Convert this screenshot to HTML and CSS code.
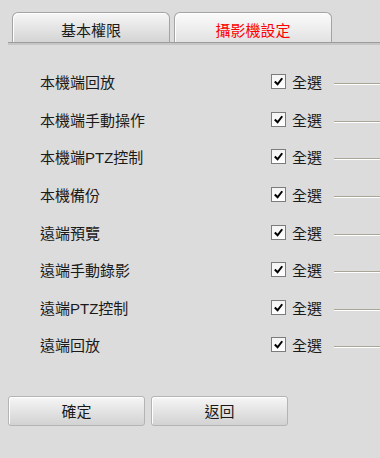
FILE: index.html
```html
<!DOCTYPE html>
<html lang="zh-Hant">
<head>
    <meta charset="UTF-8">
    <title>攝影機設定</title>
    <link rel="stylesheet" href="styles.css">
</head>
<body>
    <div class="tabs">
        <div class="tab">基本權限</div>
        <div class="tab active">攝影機設定</div>
    </div>

    <div class="perm-list">
        <div class="row">
            <span class="label">本機端回放</span>
            <span class="box"><svg viewBox="0 0 14 14"><path d="M3 7 L6 10 L11 3.5"/></svg></span>
            <span class="all">全選</span>
            <span class="track"></span>
        </div>
        <div class="row">
            <span class="label">本機端手動操作</span>
            <span class="box"><svg viewBox="0 0 14 14"><path d="M3 7 L6 10 L11 3.5"/></svg></span>
            <span class="all">全選</span>
            <span class="track"></span>
        </div>
        <div class="row">
            <span class="label">本機端PTZ控制</span>
            <span class="box"><svg viewBox="0 0 14 14"><path d="M3 7 L6 10 L11 3.5"/></svg></span>
            <span class="all">全選</span>
            <span class="track"></span>
        </div>
        <div class="row">
            <span class="label">本機備份</span>
            <span class="box"><svg viewBox="0 0 14 14"><path d="M3 7 L6 10 L11 3.5"/></svg></span>
            <span class="all">全選</span>
            <span class="track"></span>
        </div>
        <div class="row">
            <span class="label">遠端預覽</span>
            <span class="box"><svg viewBox="0 0 14 14"><path d="M3 7 L6 10 L11 3.5"/></svg></span>
            <span class="all">全選</span>
            <span class="track"></span>
        </div>
        <div class="row">
            <span class="label">遠端手動錄影</span>
            <span class="box"><svg viewBox="0 0 14 14"><path d="M3 7 L6 10 L11 3.5"/></svg></span>
            <span class="all">全選</span>
            <span class="track"></span>
        </div>
        <div class="row">
            <span class="label">遠端PTZ控制</span>
            <span class="box"><svg viewBox="0 0 14 14"><path d="M3 7 L6 10 L11 3.5"/></svg></span>
            <span class="all">全選</span>
            <span class="track"></span>
        </div>
        <div class="row">
            <span class="label">遠端回放</span>
            <span class="box"><svg viewBox="0 0 14 14"><path d="M3 7 L6 10 L11 3.5"/></svg></span>
            <span class="all">全選</span>
            <span class="track"></span>
        </div>
    </div>

    <div class="actions">
        <button class="btn">確定</button>
        <button class="btn">返回</button>
    </div>
</body>
</html>
```

FILE: styles.css
```css
body {
    margin: 0;
    background-color: #dcdcdc;
    font-family: 'Liberation Sans', 'Noto Sans CJK TC', sans-serif;
    font-size: 15px;
    color: #1a1a1a;
    overflow: hidden;
}

.tabs {
    display: flex;
    gap: 4px;
    margin-left: 8px;
    padding: 12px 0 0 4px;
    border-bottom: 1px solid #9c9c9c;
    box-shadow: 0 2px 0 #c6c6c6;
}

.tab {
    width: 156px;
    height: 29px;
    line-height: 35px;
    text-align: center;
    border: 1px solid #a4a4a4;
    border-bottom: none;
    border-radius: 6px 6px 0 0;
    background: linear-gradient(#f6f6f6, #d4d4d4);
    box-shadow: inset 1px 1px 0 #ffffff;
}

.tab.active {
    color: #ff0000;
    background: linear-gradient(#fbfbfb, #e2e2e2);
}

.perm-list {
    padding-top: 20px;
}

.row {
    display: flex;
    align-items: center;
    height: 37.6px;
}

.label {
    width: 231px;
    padding-left: 40px;
}

.box {
    width: 13px;
    height: 13px;
    border: 1px solid #7c7c7c;
    background: linear-gradient(#f4f4f4, #ffffff);
    display: flex;
}

.box svg {
    width: 13px;
    height: 13px;
    fill: none;
    stroke: #000;
    stroke-width: 2.2;
}

.all {
    margin-left: 6px;
    width: 42px;
}

.track {
    flex: 1;
    height: 1px;
    margin-top: 5px;
    background-color: #a9a697;
    border-bottom: 1px solid #ffffff;
}

.actions {
    display: flex;
    gap: 6px;
    margin: 32px 0 0 8px;
}

.btn {
    width: 137px;
    height: 30px;
    font-family: inherit;
    font-size: 15px;
    color: #1a1a1a;
    border: 1px solid #b4b4b4;
    border-radius: 3px;
    background: linear-gradient(#f6f6f6, #d2d2d2);
    box-shadow: inset 1px 1px 0 #ffffff;
    padding: 0;
}
```
